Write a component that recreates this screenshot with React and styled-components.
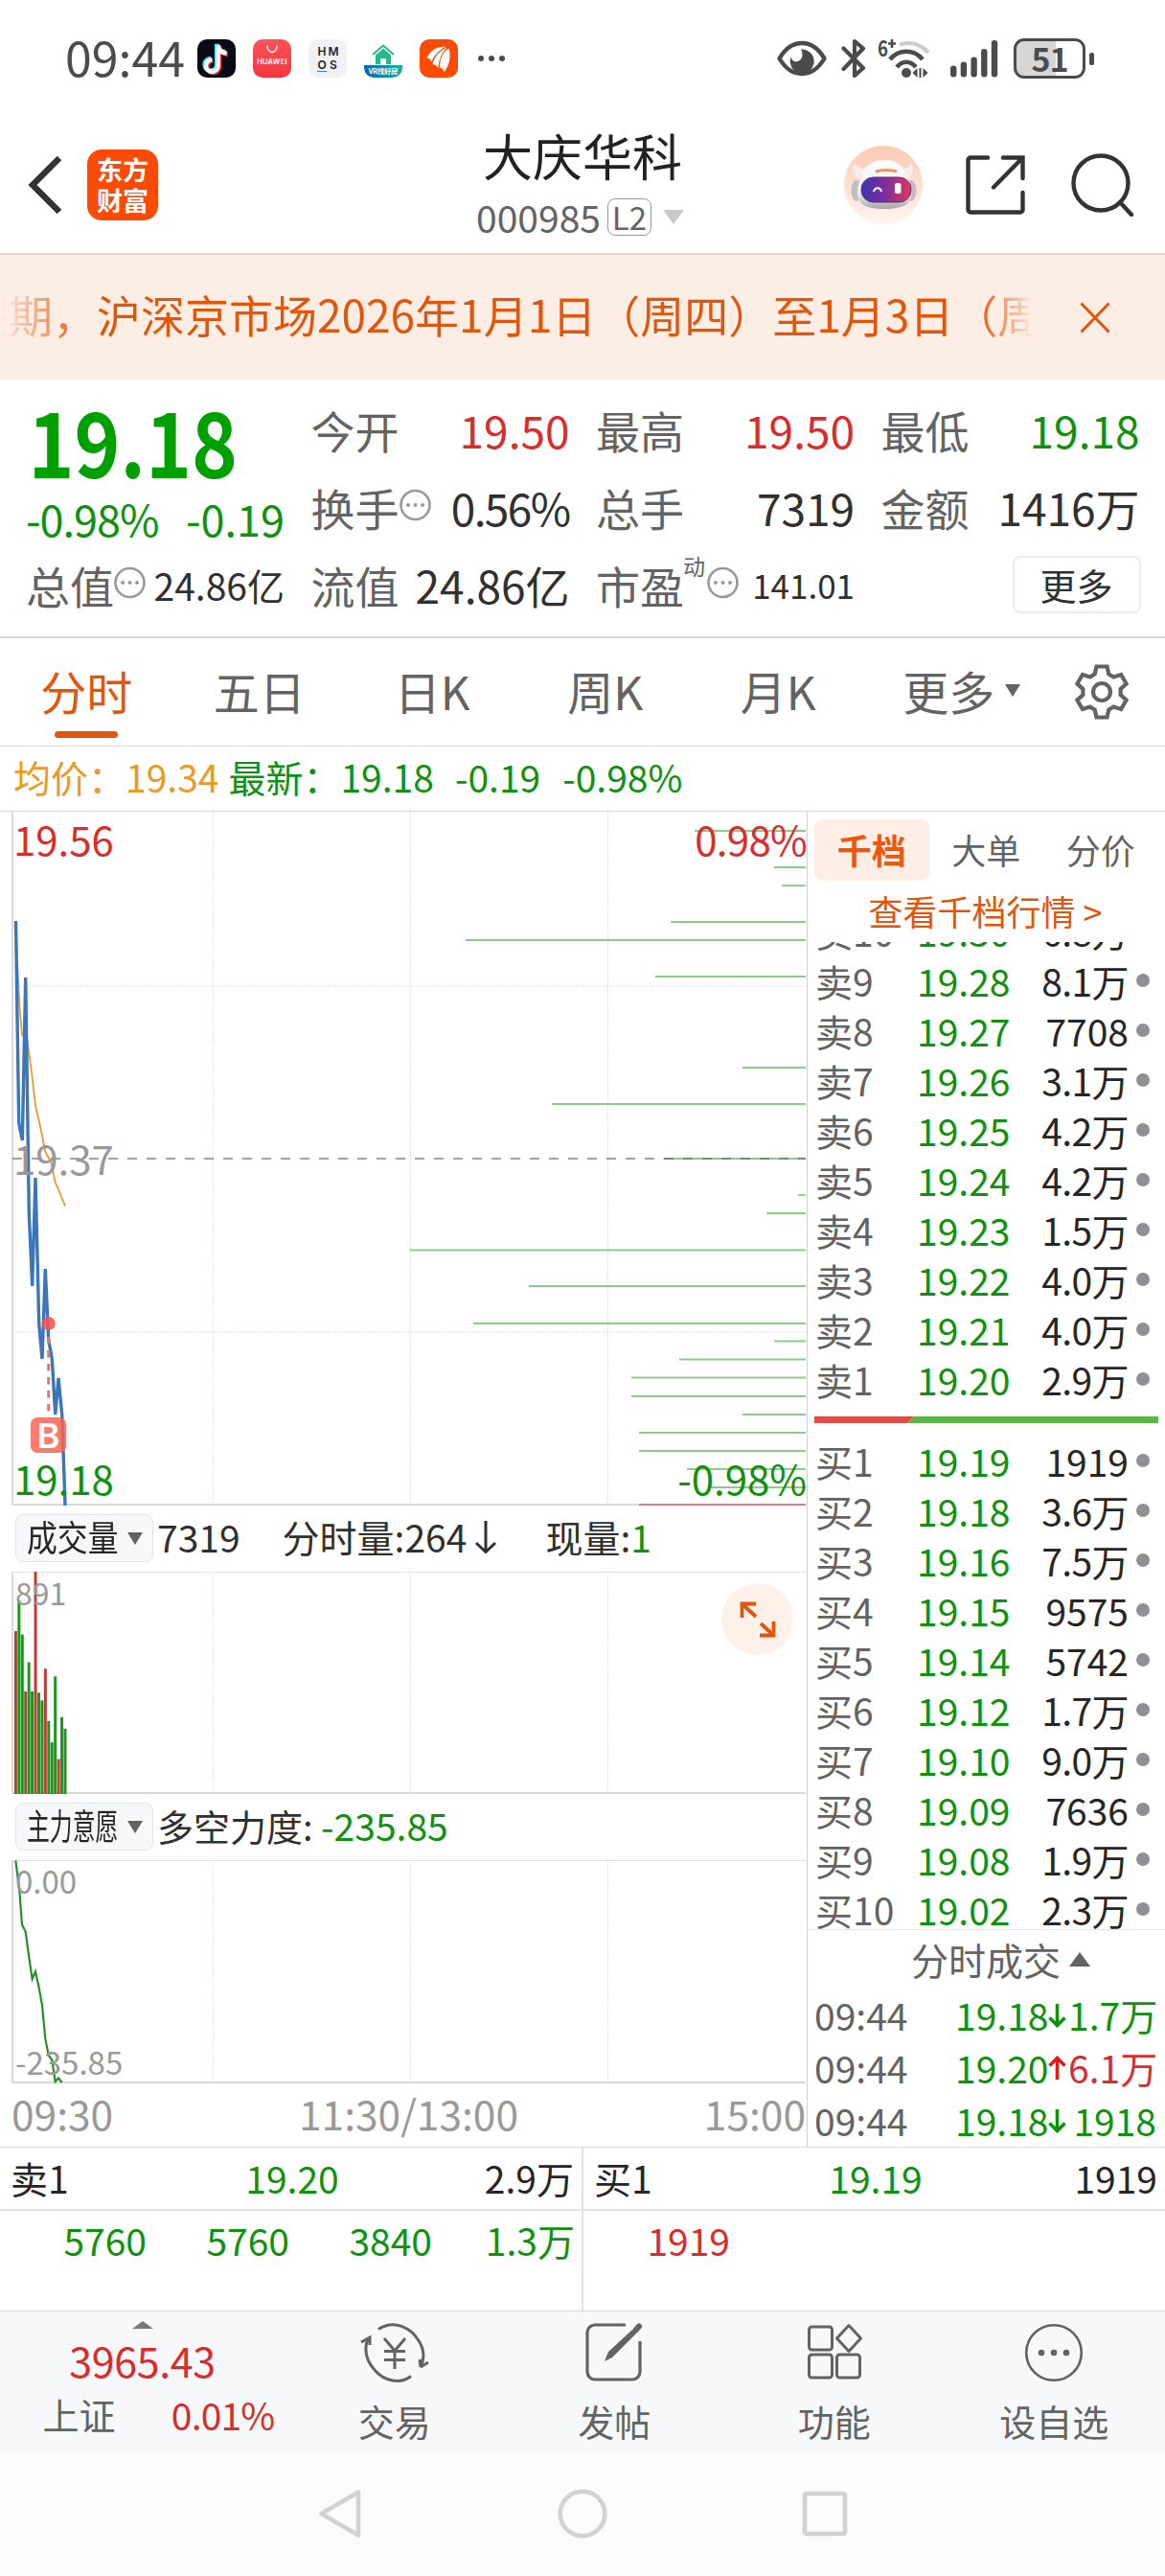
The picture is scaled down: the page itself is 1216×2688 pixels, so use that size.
import React from "react";
import styled, { createGlobalStyle, css } from "styled-components";

const C = {
  ink: "#262626",
  text: "#303030",
  sub: "#636363",
  faint: "#999999",
  line: "#d9d9d9",
  green: "#109210",
  red: "#d92d2d",
  orange: "#e2560c",
};
const tones = { up: C.red, down: C.green, ink: C.text, sub: C.sub, faint: C.faint };

const Global = createGlobalStyle`
  * { box-sizing: border-box; }
  html, body { margin: 0; padding: 0; background: #fff; }
  body {
    width: 1216px;
    font-family: "Noto Sans CJK SC", "Noto Sans", sans-serif;
    color: ${C.text};
    -webkit-font-smoothing: antialiased;
  }
`;

const Page = styled.main`
  display: flex;
  flex-direction: column;
  width: 1216px;
  height: 2688px;
  overflow: hidden;
  background: #fff;
`;

const T = styled.span`
  font-size: ${(p) => p.$size || 39}px;
  line-height: 1.1;
  font-weight: ${(p) => p.$weight || 400};
  letter-spacing: ${(p) => p.$ls || 0}px;
  color: ${(p) => tones[p.$tone] || p.$tone || C.text};
  white-space: pre;
`;

/* ---------- status bar ---------- */
const StatusBar = styled.header`
  display: flex;
  align-items: center;
  height: 122px;
  padding: 0 74px 0 68px;
  flex: none;
`;
const Clock = styled(T)`
  width: 138px;
  margin-top: -5px;
`;
const AppIcons = styled.div`
  display: flex;
  gap: 18px;
  flex: 1;
  align-items: center;
`;
const AppTile = styled.div`
  width: 40px;
  height: 40px;
  border-radius: 10px;
  overflow: hidden;
  background: ${(p) => p.$bg || "transparent"};
  svg { display: block; }
`;
const StatusIcons = styled.div`
  display: flex;
  align-items: center;
`;
const Battery = styled.div`
  display: flex;
  align-items: center;
  gap: 4px;
  margin-left: 16px;
`;
const BatteryShell = styled.div`
  display: flex;
  align-items: center;
  justify-content: center;
  width: 75px;
  height: 42px;
  border: 3.5px solid #4b4b4b;
  border-radius: 11px;
  background: linear-gradient(90deg, #d6d6d6 0 59%, #fff 59%);
`;
const BatteryNub = styled.i`
  width: 5px;
  height: 13px;
  border-radius: 2px;
  background: #4b4b4b;
`;

const Douyin = () => (
  <svg width="40" height="40" viewBox="0 0 40 40" fill="none" strokeWidth="4.6">
    <g stroke="#25f4ee" transform="translate(-1.3 -1.2)">
      <path d="M21.5 6v21.5a6.3 6.3 0 1 1-6.3-6.3M21.5 6c.5 5 4 8 9 8.500" />
    </g>
    <g stroke="#fe2c55" transform="translate(1.300 1.200)">
      <path d="M21.500 6v21.500a6.300 6.300 0 1 1-6.300-6.300M21.500 6c.5 5 4 8 9 8.500" />
    </g>
    <g stroke="#fff">
      <path d="M21.500 6v21.500a6.300 6.300 0 1 1-6.300-6.300M21.500 6c.5 5 4 8 9 8.500" />
    </g>
  </svg>
);
const HuaweiTile = styled(AppTile)`
  display: flex;
  flex-direction: column;
  align-items: center;
  background: linear-gradient(#fb5358, #f8353f);
  color: #fff;
  font: 600 7.4px/9px "Inter", sans-serif;
  letter-spacing: 0.3px;
  svg { margin: 6px 0 4px; }
`;
const HmosTile = styled(AppTile)`
  display: grid;
  grid-template-columns: 12px 12px;
  grid-auto-rows: 14px;
  place-content: center;
  place-items: center;
  background: #f1f1f3;
  color: #222;
  font: 600 12px/12px "Inter", sans-serif;
`;
const Under = styled.span`
  border-bottom: 1.5px solid #3f7df0;
`;
const VrTile = styled(AppTile)`
  display: flex;
  flex-direction: column;
  align-items: center;
  border-radius: 0 0 9px 9px;
`;
const VrLabel = styled.div`
  width: 40px;
  height: 13px;
  border-radius: 0 0 10px 10px;
  background: linear-gradient(90deg, #0c67b4, #16b39b);
  color: #fff;
  font-size: 7.4px;
  line-height: 12px;
  font-weight: 700;
  text-align: center;
  letter-spacing: -0.3px;
  white-space: nowrap;
`;

const Flame = () => (
  <svg width="40" height="40" viewBox="0 0 40 40" fill="#fff">
    <path d="M7.500 19.500C12 11 18 7.500 27.500 7.500 20 11.500 15 16.500 12.500 23.500 11.500 21 10 19.800 7.500 19.500z" />
    <path d="M13.500 26C15.500 18 20 12.500 28.500 8.500 23 14 20 21 19.500 30 18 27.500 16 26.300 13.500 26z" />
    <path d="M21 29.500C21 20 24 13.500 30.500 9.500 33 18 31 27 25.500 34.500 25 31.500 23.500 30 21 29.500z" />
  </svg>
);

const EyeIcon = () => (
  <svg width="52" height="40" viewBox="0 0 52 40">
    <path d="M2.500 20C9 9 17 4 26 4s17 5 23.500 16C43 31 35 36 26 36S9 31 2.500 20z" fill="none" stroke="#4b4b4b" strokeWidth="4.400" strokeLinejoin="round" />
    <path d="M25 10.500a12.500 12.500 0 1 1-10.500 8c1 4 4 5.500 7 4.500 5-1.500 6.500-7 3.500-12.500z" fill="#4b4b4b" />
  </svg>
);
const BluetoothIcon = () => (
  <svg width="26" height="42" viewBox="0 0 26 42" fill="none" stroke="#4b4b4b" strokeWidth="4.200" strokeLinejoin="round" strokeLinecap="round">
    <path d="M2.500 10.500 23 31l-9 8V3l9 7.500L2.500 32" />
  </svg>
);
const WifiIcon = () => (
  <svg width="56" height="42" viewBox="0 0 56 42" fill="none" stroke="#4b4b4b">
    <path d="M23 6.500C34 3 45 6 53 15" stroke="#cbcbcb" strokeWidth="4.200" />
    <path d="M13 22c9-11 25-11 34 0" strokeWidth="4.600" />
    <path d="M20 30c6-7 14-7 20 0" strokeWidth="4.600" />
    <circle cx="30" cy="36" r="5" fill="#4b4b4b" stroke="none" />
    <path d="M41.500 31v10l-5-5zM47.500 31v10l5-5zM43.500 31h2v10h-2z" fill="#4b4b4b" stroke="none" />
    <text x="0" y="19" fontSize="23" fontWeight="700" fill="#4b4b4b" stroke="none" fontFamily="Noto Sans CJK SC" textLength="11" lengthAdjust="spacingAndGlyphs">6</text>
    <path d="M15 1v9M11 5.500h8" strokeWidth="2.600" />
  </svg>
);
const SignalIcon = () => (
  <svg width="50" height="40" viewBox="0 0 50 40" fill="#4b4b4b">
    {[12, 16, 21, 29.500, 38.500].map((h, i) => (
      <rect key={i} x={i * 10.700} y={39.500 - h} width="6.400" height={h} rx="3" />
    ))}
  </svg>
);

/* ---------- title bar ---------- */
const TitleBar = styled.div`
  display: grid;
  grid-template-columns: 1fr 240px 1fr;
  height: 144px;
  flex: none;
  border-bottom: 2px solid ${C.line};
`;
const TitleLeft = styled.div`
  display: flex;
  align-items: center;
  gap: 25px;
  padding: 0 0 1px 28px;
`;
const Logo = styled.div`
  display: flex;
  flex-direction: column;
  align-items: center;
  justify-content: center;
  width: 74px;
  height: 74px;
  border-radius: 15px;
  background: #fd4a05;
  color: #fff;
  font-size: 27px;
  line-height: 32px;
  font-weight: 700;
`;
const TitleMid = styled.div`
  display: flex;
  flex-direction: column;
  align-items: center;
  padding-top: 11px;
`;
const CodeRow = styled.div`
  display: flex;
  align-items: center;
  height: 46px;
  margin: 13px 5px 0 0;
`;
const LevelBadge = styled.span`
  display: flex;
  align-items: center;
  justify-content: center;
  width: 46px;
  height: 39px;
  margin: 0 12px 0 7px;
  border: 1.5px solid #999;
  border-radius: 8px;
`;
const TitleRight = styled.div`
  display: flex;
  align-items: center;
  justify-content: flex-end;
  padding: 0 32px 1px 0;
  svg { display: block; }
`;
const Gap = styled.i`
  width: ${(p) => p.$w}px;
  flex: none;
`;

const Robot = () => (
  <svg width="82" height="82" viewBox="0 0 82 82">
    <defs>
      <linearGradient id="halo" x1="0" y1="0" x2="0" y2="1">
        <stop offset="0" stopColor="#fdcab2" />
        <stop offset="1" stopColor="#fff5f0" />
      </linearGradient>
      <linearGradient id="visor" x1="0" y1="0" x2="1" y2="0">
        <stop offset="0" stopColor="#3d35ae" />
        <stop offset=".45" stopColor="#7a2ba0" />
        <stop offset="1" stopColor="#df3a5a" />
      </linearGradient>
      <linearGradient id="shell" x1="0" y1="0" x2="0" y2="1">
        <stop offset="0" stopColor="#ffffff" />
        <stop offset=".7" stopColor="#ebe8ea" />
        <stop offset="1" stopColor="#a9a5aa" />
      </linearGradient>
    </defs>
    <circle cx="41" cy="41" r="41" fill="url(#halo)" />
    <path d="M11 18c-4 6-2 12 4 16l10-9c-6 0-12-2-14-7zM70 18c4 6 2 12-4 16l-9-9c6 0 11-2 13-7z" fill="#f3eded" />
    <ellipse cx="13" cy="47" rx="5.500" ry="11" fill="#bfbcc2" />
    <ellipse cx="70" cy="47" rx="5.500" ry="11" fill="#bfbcc2" />
    <path d="M18 34c2-12 9-18 23-19 15 0 23 8 25 19 6 9 6 20 1 26-5 4-14 6-25 6-12 0-20-2-24-6-6-7-5-18 0-26z" fill="url(#shell)" />
    <rect x="18" y="33" width="52" height="26" rx="12.500" fill="url(#visor)" stroke="#5a3565" strokeWidth="1" />
    <path d="M31 48c1-5 7-5 8 0" stroke="#fff" strokeWidth="2" fill="none" />
    <rect x="53" y="39" width="6.500" height="11" rx="2" fill="#fff" />
    <path d="M33 27c6-2 16-2 22 0" stroke="#d99a62" strokeWidth="3" fill="none" />
  </svg>
);

/* ---------- notice ---------- */
const Notice = styled.div`
  display: flex;
  align-items: center;
  height: 130px;
  flex: none;
  background: #fdeee5;
`;
const Ticker = styled.div`
  width: 1082px;
  margin-top: -8px;
  overflow: hidden;
  mask-image: linear-gradient(90deg, transparent 0, #000 90px, #000 1020px, transparent 1080px);
`;
const TickerText = styled(T)`
  display: block;
  margin-left: -37px;
  line-height: 70px;
`;

/* ---------- quote ---------- */
const Quote = styled.section`
  display: grid;
  grid-template-columns: repeat(4, 270px);
  grid-template-rows: repeat(3, 81px);
  column-gap: 27.500px;
  height: 270px;
  padding: 12px 0 0 27px;
  flex: none;
  border-bottom: 2px solid ${C.line};
`;
const PriceCell = styled.div`
  grid-row: span 2;
  display: flex;
  flex-direction: column;
`;
const BigPrice = styled(T)`
  line-height: 100px;
  height: 102px;
  padding-left: 3px;
  transform: scaleX(0.865);
  transform-origin: 0 50%;
`;
const Change = styled.div`
  display: flex;
  justify-content: space-between;
  align-items: center;
  height: 60px;
  margin-top: 2px;
`;
const Stat = styled.div`
  display: flex;
  align-items: center;
  justify-content: space-between;
  height: 81px;
`;
const StatLabel = styled.div`
  display: flex;
  align-items: center;
  sup {
    align-self: flex-start;
    font-size: 23px;
    line-height: 24px;
    margin: -7px 2px 0 -1px;
    color: ${C.sub};
  }
`;
const MoreButton = styled.button`
  width: 134px;
  height: 60px;
  margin: 0 -1px 2px auto;
  padding: 0;
  border: 2px solid #ececec;
  border-radius: 8px;
  background: #fff;
  font: 400 38px/50px "Noto Sans CJK SC", sans-serif;
  color: ${C.text};
`;
const DotsIcon = styled.svg`
  margin-bottom: 6px;
`;
const MoreDots = () => (
  <DotsIcon width="33" height="34" viewBox="0 0 33 34">
    <circle cx="16.500" cy="17" r="15" fill="none" stroke="#999" strokeWidth="2.600" />
    <g fill="#999"><circle cx="9" cy="17" r="2" /><circle cx="16.500" cy="17" r="2" /><circle cx="24" cy="17" r="2" /></g>
  </DotsIcon>
);

/* ---------- period tabs ---------- */
const Tabs = styled.nav`
  display: flex;
  height: 113px;
  flex: none;
  border-bottom: 1px solid ${C.line};
`;
const Tab = styled.div`
  display: flex;
  flex-direction: column;
  align-items: center;
  justify-content: space-between;
  width: 180.5px;
  padding: 26px 0 8px;
`;
const TabLabel = styled.div`
  display: flex;
  align-items: center;
  gap: 11px;
  height: 56px;
  padding-left: ${(p) => p.$shift || 0}px;
`;
const TabMark = styled.i`
  width: 66px;
  height: 7px;
  border-radius: 4px;
  background: ${C.orange};
`;
const Triangle = styled.i`
  width: 0;
  height: 0;
  border-left: ${(p) => p.$w / 2}px solid transparent;
  border-right: ${(p) => p.$w / 2}px solid transparent;
  ${(p) =>
    p.$up
      ? css`border-bottom: ${p.$h}px solid ${p.$c || C.sub};`
      : css`border-top: ${p.$h}px solid ${p.$c || C.sub};`}
`;
const Gear = styled.svg`
  margin: 27px 0 0 39px;
`;

const Info = styled.div`
  display: flex;
  align-items: center;
  height: 68px;
  padding: 0 0 4px 14px;
  flex: none;
  border-bottom: 1px solid ${C.line};
`;

/* ---------- chart column ---------- */
const Market = styled.section`
  display: flex;
  height: 1394px;
  flex: none;
  border-bottom: 1px solid ${C.line};
`;
const Charts = styled.div`
  width: 842px;
`;
const Plot = styled.div`
  position: relative;
  height: ${(p) => p.$h}px;
  svg { display: block; }
`;
const Tag = styled(T)`
  position: absolute;
  line-height: 48px;
  ${(p) => (p.$right !== undefined ? `right:${p.$right}px;` : `left:${p.$left}px;`)}
  top: ${(p) => p.$top}px;
`;
const BuyMark = styled.span`
  position: absolute;
  left: 32px;
  top: 632px;
  display: flex;
  align-items: center;
  justify-content: center;
  width: 37px;
  height: 37px;
  border-radius: 7px;
  background: rgba(250, 100, 84, 0.85);
  color: #fff;
  font: 600 36px/36px "Inter", sans-serif;
`;
const Expand = styled.button`
  position: absolute;
  right: 14px;
  top: 12px;
  width: 75px;
  height: 75px;
  padding: 0;
  border: 0;
  border-radius: 50%;
  background: #fef1ea;
  display: grid;
  place-items: center;
`;
const SubHead = styled.div`
  display: flex;
  align-items: center;
  height: 69px;
  padding: 0 0 4px 16px;
`;
const Chip = styled.div`
  display: flex;
  align-items: center;
  justify-content: space-between;
  width: 144px;
  height: 50px;
  margin: 3px 4px 0 0;
  padding: 0 10px 0 11px;
  border: 1px solid #e2e4e8;
  border-radius: 8px;
  background: #f7f8fa;
`;
const ChipText = styled.span`
  width: 97px;
  font-size: 37px;
  line-height: 44px;
  margin-top: -4px;
  white-space: nowrap;
  transform: scaleX(${(p) => p.$fit});
  transform-origin: 0 50%;
  color: ${C.ink};
`;
const Axis = styled.div`
  display: grid;
  grid-template-columns: 1fr auto 1fr;
  align-items: center;
  height: 66px;
  padding: 0 1px 3px 12px;
  ${T}:last-child { text-align: right; }
`;

const vGrid = [222.500, 428.500, 634.500];
const Grid = ({ h }) => (
  <g stroke="#cfcfcf" strokeWidth="1" strokeDasharray="1 1.500">
    {vGrid.map((x) => <line key={x} x1={x} x2={x} y1="0" y2={h} />)}
  </g>
);

const TOP = 847;
const priceLine = [[16.500, 961], [19.700, 1172], [23.300, 1190], [26.700, 1020], [30.300, 1266], [33.700, 1342], [37, 1229], [40.700, 1381], [44, 1418], [47.300, 1324], [50.700, 1398], [54.300, 1418], [57.700, 1476], [61, 1438], [64.700, 1476], [68, 1571]];
const avgLine = [[16.500, 961], [18.300, 1009], [20.300, 1048], [23, 1080], [28, 1083], [29.500, 1093], [33.300, 1121], [37, 1154], [41, 1171], [44, 1185], [47.300, 1202], [53.300, 1213], [57.700, 1234], [61, 1241], [68, 1258.500]];
const depth = [[725, 867], [808, 905], [816, 924], [700, 962], [486, 981], [684, 1019], [775, 1114], [576, 1152], [692.500, 1209], [833, 1247], [800, 1266], [428, 1304.500], [552, 1342], [494, 1381], [808, 1399.500], [709, 1418.500], [659, 1437.500], [659, 1457], [775, 1476], [667, 1495], [667, 1514], [717, 1533], [742, 1552]];
const pts = (a, off) => a.map(([x, y]) => `${x},${y - off}`).join(" ");

const volumes = [[317, 1], [245, 0], [325, 0], [458, 1], [390, 0], [458, 0], [178, 1], [461, 0], [479, 0], [405, 1], [527, 0], [577, 0], [423, 0], [616, 1], [518, 0], [545, 0]];
const force = [[49, 853], [61, 925], [69, 1003], [80, 1020], [91, 1080], [101, 1130], [111, 1113], [122, 1150], [132, 1192], [142, 1270], [152, 1308], [163, 1320], [173, 1370], [183, 1362], [194, 1372]];

/* ---------- order book ---------- */
const Book = styled.aside`
  display: flex;
  flex-direction: column;
  flex: 1;
  border-left: 1px solid #d2d2d2;
`;
const BookTabs = styled.div`
  display: flex;
  padding: 8px 0 0 7px;
`;
const BookTab = styled.div`
  display: flex;
  align-items: center;
  justify-content: center;
  width: 119.5px;
  height: 64px;
  border-radius: 9px;
  background: ${(p) => (p.$on ? "#feeee6" : "transparent")};
`;
const BookLink = styled.div`
  display: flex;
  justify-content: center;
  align-items: center;
  height: 64px;
  padding-right: 2px;
`;
const Levels = styled.div`
  display: flex;
  flex-direction: column;
  justify-content: flex-end;
  height: 1030px;
  overflow: hidden;
`;
const LevelStack = styled.div`
  margin-bottom: -5px;
`;
const Level = styled.div`
  display: grid;
  grid-template-columns: 88px 122px 117px 14px;
  align-items: center;
  height: 52px;
  padding-left: 8px;
  ${T}:nth-child(2) { padding-left: 18px; }
  ${T}:nth-child(3) { text-align: right; margin-left: -10px; }
`;
const Dot = styled.i`
  width: 14px;
  height: 14px;
  margin: 0 0 0 8px;
  border-radius: 50%;
  background: #8f8f95;
`;
const Ratio = styled.div`
  display: flex;
  align-items: center;
  height: 33px;
  padding-left: 7px;
  svg { display: block; }
`;
const TradeHead = styled.div`
  display: flex;
  align-items: center;
  justify-content: center;
  gap: 9px;
  height: 62px;
  padding: 0 6px 0 36px;
  border-top: 1px solid #e6e6e6;
`;
const Trade = styled.div`
  display: grid;
  grid-template-columns: 147px 95px 23px 92px;
  align-items: center;
  height: 55px;
  padding-left: 7px;
  ${T}:last-child { text-align: right; }
`;

/* ---------- queue ---------- */
const Queue = styled.section`
  display: grid;
  grid-template-columns: 607px 609px;
  height: 171px;
  flex: none;
  border-bottom: 1px solid ${C.line};
`;
const QueueSide = styled.div`
  border-left: ${(p) => (p.$line ? "2px solid #e2e2e2" : "0")};
`;
const QueueHead = styled.div`
  display: grid;
  grid-template-columns: 1fr auto 1fr;
  align-items: center;
  height: 66px;
  padding: 0 8px 1px 11px;
  border-bottom: 2px solid #e2e2e2;
  ${T}:last-child { text-align: right; }
`;
const QueueRow = styled.div`
  display: grid;
  grid-template-columns: repeat(4, 149px);
  align-items: center;
  height: 60px;
  padding-left: 4px;
  text-align: right;
`;

/* ---------- footer ---------- */
const Footer = styled.nav`
  display: grid;
  grid-template-columns: 297px repeat(4, 229.500px);
  height: 146px;
  flex: none;
  background: #f7f8fa;
`;
const IndexBox = styled.div`
  display: flex;
  flex-direction: column;
  align-items: center;
  padding-top: 10px;
`;
const IndexValue = styled(T)`
  margin-top: 9px;
`;
const IndexRow = styled.div`
  display: flex;
  justify-content: space-between;
  width: 242px;
  margin: 12px 0 0 34px;
`;
const Action = styled.div`
  display: flex;
  flex-direction: column;
  align-items: center;
  justify-content: space-between;
  padding: 10px 0 11px;
`;
const SysNav = styled.div`
  display: flex;
  align-items: center;
  justify-content: space-between;
  flex: 1;
  padding: 0 331px 0 332px;
  background: #fbfbfb;
`;

const sells = [["卖10", "19.30", "6.8万"], ["卖9", "19.28", "8.1万"], ["卖8", "19.27", "7708"], ["卖7", "19.26", "3.1万"], ["卖6", "19.25", "4.2万"], ["卖5", "19.24", "4.2万"], ["卖4", "19.23", "1.5万"], ["卖3", "19.22", "4.0万"], ["卖2", "19.21", "4.0万"], ["卖1", "19.20", "2.9万"]];
const buys = [["买1", "19.19", "1919"], ["买2", "19.18", "3.6万"], ["买3", "19.16", "7.5万"], ["买4", "19.15", "9575"], ["买5", "19.14", "5742"], ["买6", "19.12", "1.7万"], ["买7", "19.10", "9.0万"], ["买8", "19.09", "7636"], ["买9", "19.08", "1.9万"], ["买10", "19.02", "2.3万"]];
const trades = [["09:44", "19.18", 0, "1.7万"], ["09:44", "19.20", 1, "6.1万"], ["09:44", "19.18", 0, "1918"]];

const LevelRow = ({ row }) => (
  <Level>
    <T $tone="sub">{row[0]}</T>
    <T $tone="down">{row[1]}</T>
    <T $tone={C.ink} $ls={row[2].length === 4 && row[2].endsWith("万") ? -0.6 : 0}>{row[2]}</T>
    <Dot />
  </Level>
);

const StatItem = ({ label, sup, dots, value, tone, size = 46, ls }) => (
  <Stat>
    <StatLabel>
      <T $size={46} $tone="sub">{label}</T>
      {sup && <sup>{sup}</sup>}
      {dots && <MoreDots />}
    </StatLabel>
    <T $size={size} $tone={tone} $ls={ls}>{value}</T>
  </Stat>
);

export default function App() {
  return (
    <Page>
      <Global />
      <StatusBar>
        <Clock $size={50} $tone="#4b4b4b">09:44</Clock>
        <AppIcons>
          <AppTile $bg="#0a0a14"><Douyin /></AppTile>
          <HuaweiTile>
            <svg width="12" height="9" viewBox="0 0 12 9"><path d="M.8.500a5.200 7 0 0 0 10.400 0" fill="none" stroke="#fff" strokeWidth="1.300" /></svg>
            HUAWEI
          </HuaweiTile>
          <HmosTile><span>H</span><span>M</span><Under>O</Under><span>S</span></HmosTile>
          <VrTile>
            <svg width="26" height="27" viewBox="0 0 26 27"><path d="M2 16 13 6.500 24 16" fill="none" stroke="#25b88a" strokeWidth="2" /><path d="M5 16.500 13 9.500l8 7V26h-5v-6h-6v6H5z" fill="#25b88a" /></svg>
            <VrLabel>VR找好房</VrLabel>
          </VrTile>
          <AppTile $bg="#fd4a05"><Flame /></AppTile>
          <svg width="32" height="8" viewBox="0 0 32 8" fill="#4b4b4b"><circle cx="6" cy="4" r="3" /><circle cx="17" cy="4" r="3" /><circle cx="28" cy="4" r="3" /></svg>
        </AppIcons>
        <StatusIcons>
          <EyeIcon />
          <Gap $w={15} />
          <BluetoothIcon />
          <Gap $w={12} />
          <WifiIcon />
          <Gap $w={20} />
          <SignalIcon />
          <Battery>
            <BatteryShell><T $size={34} $weight={700} $tone="#4b4b4b" $ls={-1}>51</T></BatteryShell>
            <BatteryNub />
          </Battery>
        </StatusIcons>
      </StatusBar>

      <TitleBar>
        <TitleLeft>
          <svg width="38" height="62" viewBox="0 0 38 62" fill="none" stroke="#333" strokeWidth="6.500"><path d="M34 3 6 31l28 28" /></svg>
          <Logo><span>东方</span><span>财富</span></Logo>
        </TitleLeft>
        <TitleMid>
          <T $size={52} $tone="#222">大庆华科</T>
          <CodeRow>
            <T $tone="sub">000985</T>
            <LevelBadge><T $size={33} $tone="sub">L2</T></LevelBadge>
            <Triangle $w={23} $h={15} $c="#c9c9c9" />
          </CodeRow>
        </TitleMid>
        <TitleRight>
          <Robot />
          <Gap $w={44} />
          <svg width="64" height="64" viewBox="0 0 64 64" fill="none" stroke="#333" strokeWidth="4.400" strokeLinecap="round">
            <path d="M24 3.500H6a2.500 2.500 0 0 0-2.500 2.500v52A2.500 2.500 0 0 0 6 60.500h52a2.500 2.500 0 0 0 2.500-2.500V40M40 3.500h20.500V25M59 5 30 34.500" />
          </svg>
          <Gap $w={47} />
          <svg width="66" height="66" viewBox="0 0 66 66" fill="none" stroke="#333" strokeWidth="4.400" strokeLinecap="round">
            <circle cx="31" cy="31" r="28.500" /><path d="m51 51 12 13" />
          </svg>
        </TitleRight>
      </TitleBar>

      <Notice>
        <Ticker><TickerText $size={46} $tone={C.orange}>假期，沪深京市场2026年1月1日（周四）至1月3日（周六）</TickerText></Ticker>
        <Gap $w={45} />
        <svg width="32" height="33" viewBox="0 0 32 33" stroke={C.orange} strokeWidth="3"><path d="m1.500 1.500 29 30M30.500 1.500l-29 30" /></svg>
      </Notice>

      <Quote>
        <PriceCell>
          <BigPrice $size={94} $weight={700} $tone="#00a000">19.18</BigPrice>
          <Change>
            <T $size={45} $tone="down" $ls={-1}>-0.98%</T>
            <T $size={45} $tone="down">-0.19</T>
          </Change>
        </PriceCell>
        <StatItem label="今开" value="19.50" tone="up" />
        <StatItem label="最高" value="19.50" tone="up" />
        <StatItem label="最低" value="19.18" tone="down" />
        <StatItem label="换手" dots value="0.56%" ls={-1.6} />
        <StatItem label="总手" value="7319" />
        <StatItem label="金额" value="1416万" />
        <StatItem label="总值" dots value="24.86亿" size={39} />
        <StatItem label="流值" value="24.86亿" />
        <StatItem label="市盈" sup="动" dots value="141.01" size={35} />
        <Stat><MoreButton>更多</MoreButton></Stat>
      </Quote>

      <Tabs>
        <Tab><TabLabel><T $size={48} $tone={C.orange}>分时</T></TabLabel><TabMark /></Tab>
        {["五日", "日K", "周K", "月K"].map((t) => (
          <Tab key={t}><TabLabel><T $size={48} $tone="sub">{t}</T></TabLabel></Tab>
        ))}
        <Tab><TabLabel $shift={22}><T $size={48} $tone="sub">更多</T><Triangle $w={16} $h={13} /></TabLabel></Tab>
        <Gear width="56" height="58" viewBox="0 0 56 58" fill="none" stroke={C.sub} strokeWidth="4.200">
          <path d="M22.500 2.500h11l1.800 8 5 2.900 7.800-2.400 5.500 9.500-6 5.500v6l6 5.500-5.500 9.500-7.800-2.400-5 2.900-1.800 8h-11l-1.800-8-5-2.900-7.800 2.400-5.500-9.500 6-5.500v-6l-6-5.500 5.500-9.500 7.800 2.400 5-2.900z" />
          <circle cx="28" cy="29" r="9" />
        </Gear>
      </Tabs>

      <Info>
        <T $tone="#ea9a26">均价：19.34</T>
        <Gap $w={10} />
        <T $tone="down">最新：19.18</T>
        <Gap $w={22} />
        <T $tone="down">-0.19</T>
        <Gap $w={23} />
        <T $tone="down">-0.98%</T>
      </Info>

      <Market>
        <Charts>
          <Plot $h={724}>
            <svg width="842" height="724">
              <Grid h={724} />
              <g stroke="#dcdcdc" strokeDasharray="2 1.500"><line x1="13" x2="841" y1="182" y2="182" /><line x1="13" x2="841" y1="543" y2="543" /></g>
              <path d="M13 0V723H841" fill="none" stroke="#d9d9d9" strokeWidth="2" />
              <g stroke="#8fca8c" strokeWidth="1.800">
                {depth.map(([x, y]) => <line key={y} x1={x} x2="841" y1={y - TOP} y2={y - TOP} />)}
              </g>
              <line x1="667" x2="841" y1="723" y2="723" stroke="#d9807c" strokeWidth="2" />
              <line x1="13" x2="841" y1="362" y2="362" stroke="#5a5a5a" strokeOpacity=".75" strokeWidth="1.600" strokeDasharray="10 10" />
              <polyline points={pts(avgLine, TOP)} fill="none" stroke="#e79a30" strokeWidth="1.800" />
              <polyline points={pts(priceLine, TOP)} fill="none" stroke="#3a76b9" strokeWidth="3.400" strokeLinejoin="bevel" />
              <circle cx="50.700" cy="534" r="7" fill="#f4574b" fillOpacity=".9" />
              <line x1="50.700" x2="50.700" y1="548" y2="627" stroke="#e5766e" strokeWidth="3" strokeDasharray="7.500 6.500" />
            </svg>
            <Tag $size={42} $tone="up" $left={14} $top={4}>19.56</Tag>
            <Tag $size={42} $tone="up" $right={0} $top={4} $ls={-0.7}>0.98%</Tag>
            <Tag $size={42} $tone="faint" $left={14} $top={337}>19.37</Tag>
            <Tag $size={42} $tone="down" $left={14} $top={671}>19.18</Tag>
            <Tag $size={42} $tone="down" $right={0} $top={671}>-0.98%</Tag>
            <BuyMark>B</BuyMark>
          </Plot>
          <SubHead>
            <Chip><ChipText $fit={0.86}>成交量</ChipText><Triangle $w={17} $h={13} /></Chip>
            <T>7319</T>
            <Gap $w={44} />
            <T>分时量:264</T>
            <Gap $w={8} />
            <svg width="24" height="36" viewBox="0 0 24 36" fill="none" stroke={C.text} strokeWidth="3"><path d="M12 1v32M2 24l10 9.500L22 24" /></svg>
            <Gap $w={50} />
            <T>现量:</T><T $tone="down">1</T>
          </SubHead>
          <Plot $h={232}>
            <svg width="842" height="232">
              <Grid h={232} />
              <path d="M13 .5H841" stroke="#e0e0e0" />
              <path d="M13 0V231H841" fill="none" stroke="#dadada" strokeWidth="2" />
              {volumes.map(([v, up], i) => {
                const y = v / 2.240 - 79.500;
                return <rect key={i} x={14.900 + i * 3.440} y={y} width="3" height={232 - y} fill={up ? "#c23c34" : "#1f9420"} />;
              })}
            </svg>
            <Tag $size={32} $tone="faint" $left={16} $top={-3}>891</Tag>
            <Expand>
              <svg width="38" height="38" viewBox="0 0 38 38" fill="none" stroke={C.orange} strokeWidth="3.800">
                <path d="M2.500 17V2.500H17M3 3l14 13M21 35.500h14.500V21M35 35 22 23" />
              </svg>
            </Expand>
          </Plot>
          <SubHead>
            <Chip><ChipText $fit={0.645}>主力意愿</ChipText><Triangle $w={17} $h={13} /></Chip>
            <T $size={38}>多空力度: </T><T $tone="down">-235.85</T>
          </SubHead>
          <Plot $h={233}>
            <svg width="842" height="233">
              <Grid h={233} />
              <path d="M13 .5H841" stroke="#e0e0e0" />
              <path d="M13 0V232H841" fill="none" stroke="#dadada" strokeWidth="2" />
              <polyline points={force.map(([x, y]) => `${x / 3},${y / 2.240 - 380.500}`).join(" ")} fill="none" stroke="#23912a" strokeWidth="2.200" />
            </svg>
            <Tag $size={33} $tone="faint" $left={16} $top={-3}>0.00</Tag>
            <Tag $size={33} $tone="faint" $left={16} $top={186}>-235.85</Tag>
          </Plot>
          <Axis>
            <T $size={42.5} $tone="faint">09:30</T>
            <T $size={42.5} $tone="faint">11:30/13:00</T>
            <T $size={42.5} $tone="faint">15:00</T>
          </Axis>
        </Charts>

        <Book>
          <BookTabs>
            <BookTab $on><T $size={36} $weight={700} $tone="#f0560c">千档</T></BookTab>
            <BookTab><T $size={36} $tone="sub">大单</T></BookTab>
            <BookTab><T $size={36} $tone="sub">分价</T></BookTab>
          </BookTabs>
          <BookLink><T $size={36} $tone={C.orange}>查看千档行情 &gt;</T></BookLink>
          <Levels>
            <LevelStack>
              {sells.map((r) => <LevelRow key={r[0]} row={r} />)}
              <Ratio>
                <svg width="359" height="7" viewBox="0 0 359 7"><path d="M0 0h104l-7 7H0z" fill="#e04c49" /><path d="M104 0h255v7H97z" fill="#5cb648" /></svg>
              </Ratio>
              {buys.map((r) => <LevelRow key={r[0]} row={r} />)}
            </LevelStack>
          </Levels>
          <TradeHead><T $tone="sub">分时成交</T><Triangle $up $w={23} $h={15} /></TradeHead>
          {trades.map(([t, p, up, q], i) => (
            <Trade key={i}>
              <T $tone="sub">{t}</T>
              <T $tone="down">{p}</T>
              <svg width="23" height="26" viewBox="0 0 23 26" fill="none" stroke={up ? "#d81e1e" : C.green} strokeWidth="3.600">
                <path d={up ? "M11.500 25V3M3.500 10.500l8-8 8 8" : "M11.500 1v22M3.500 15.500l8 8 8-8"} />
              </svg>
              <T $tone={up ? "up" : "down"}>{q}</T>
            </Trade>
          ))}
        </Book>
      </Market>

      <Queue>
        <QueueSide>
          <QueueHead><T $tone={C.ink}>卖1</T><T $tone="down">19.20</T><T $tone={C.ink}>2.9万</T></QueueHead>
          <QueueRow>{["5760", "5760", "3840", "1.3万"].map((v, i) => <T key={i} $tone="down">{v}</T>)}</QueueRow>
        </QueueSide>
        <QueueSide $line>
          <QueueHead><T $tone={C.ink}>买1</T><T $tone="down">19.19</T><T $tone={C.ink}>1919</T></QueueHead>
          <QueueRow><T $tone="up">1919</T></QueueRow>
        </QueueSide>
      </Queue>

      <Footer>
        <IndexBox>
          <Triangle $up $w={23} $h={8} $c="#777" />
          <IndexValue $size={43} $tone="up" $ls={-0.4}>3965.43</IndexValue>
          <IndexRow><T $size={38} $tone="sub">上证</T><T $size={39} $tone="up" $ls={-0.8}>0.01%</T></IndexRow>
        </IndexBox>
        <Action>
          <svg width="72" height="66" viewBox="0 0 72 66" fill="none" stroke={C.sub} strokeWidth="3">
            <path d="M19 8.500C35-2 53 6 62 22c5 9 5 18 1 26M63 48l8-5M63 48l-1-8M53 57.500C42 66 25 63 15 51 6 41 4 29 8 18M1 22l9-5v8" />
            <path d="m25 18 11 13 11-13M36 31v19M25 31.500h22M25 40.500h22" />
          </svg>
          <T $size={38} $tone="sub">交易</T>
        </Action>
        <Action>
          <svg width="60" height="64" viewBox="0 0 60 64" fill="none" stroke={C.sub} strokeWidth="3.200">
            <path d="M42 4H10a8 8 0 0 0-8 8v41a8 8 0 0 0 8 8h39a8 8 0 0 0 8-8V21" />
            <path d="m20 42 4-10L49 9l4 4-25 25z" fill={C.sub} stroke="none" /><path d="m52.500 9.500 3.500-4" strokeWidth="6" strokeLinecap="round" />
          </svg>
          <T $size={38} $tone="sub">发帖</T>
        </Action>
        <Action>
          <svg width="60" height="64" viewBox="0 0 60 64" fill="none" stroke={C.sub} strokeWidth="3" strokeLinejoin="round">
            <rect x="3.500" y="6" width="24" height="24" rx="3" /><rect x="3.500" y="35" width="24" height="24" rx="3" /><rect x="32.500" y="35" width="24" height="24" rx="3" />
            <path d="M45 4.500 57.500 18 45 31.500 32.500 18z" />
          </svg>
          <T $size={38} $tone="sub">功能</T>
        </Action>
        <Action>
          <svg width="62" height="64" viewBox="0 0 62 64"><circle cx="31" cy="33" r="28.800" fill="none" stroke={C.sub} strokeWidth="2.600" /><g fill={C.sub}><circle cx="18" cy="33" r="3.300" /><circle cx="31" cy="33" r="3.300" /><circle cx="44" cy="33" r="3.300" /></g></svg>
          <T $size={38} $tone="sub">设自选</T>
        </Action>
      </Footer>

      <SysNav>
        <svg width="46" height="52" viewBox="0 0 46 52" fill="none" stroke="#d2d2d2" strokeWidth="4.600" strokeLinejoin="round"><path d="M42 3.500v45L3.500 26z" /></svg>
        <svg width="52" height="52" viewBox="0 0 52 52" fill="none" stroke="#d2d2d2" strokeWidth="4.600"><circle cx="26" cy="26" r="23.300" /></svg>
        <svg width="48" height="52" viewBox="0 0 48 52" fill="none" stroke="#d2d2d2" strokeWidth="4.600"><rect x="3" y="5" width="42" height="42" rx="2" /></svg>
      </SysNav>
    </Page>
  );
}
